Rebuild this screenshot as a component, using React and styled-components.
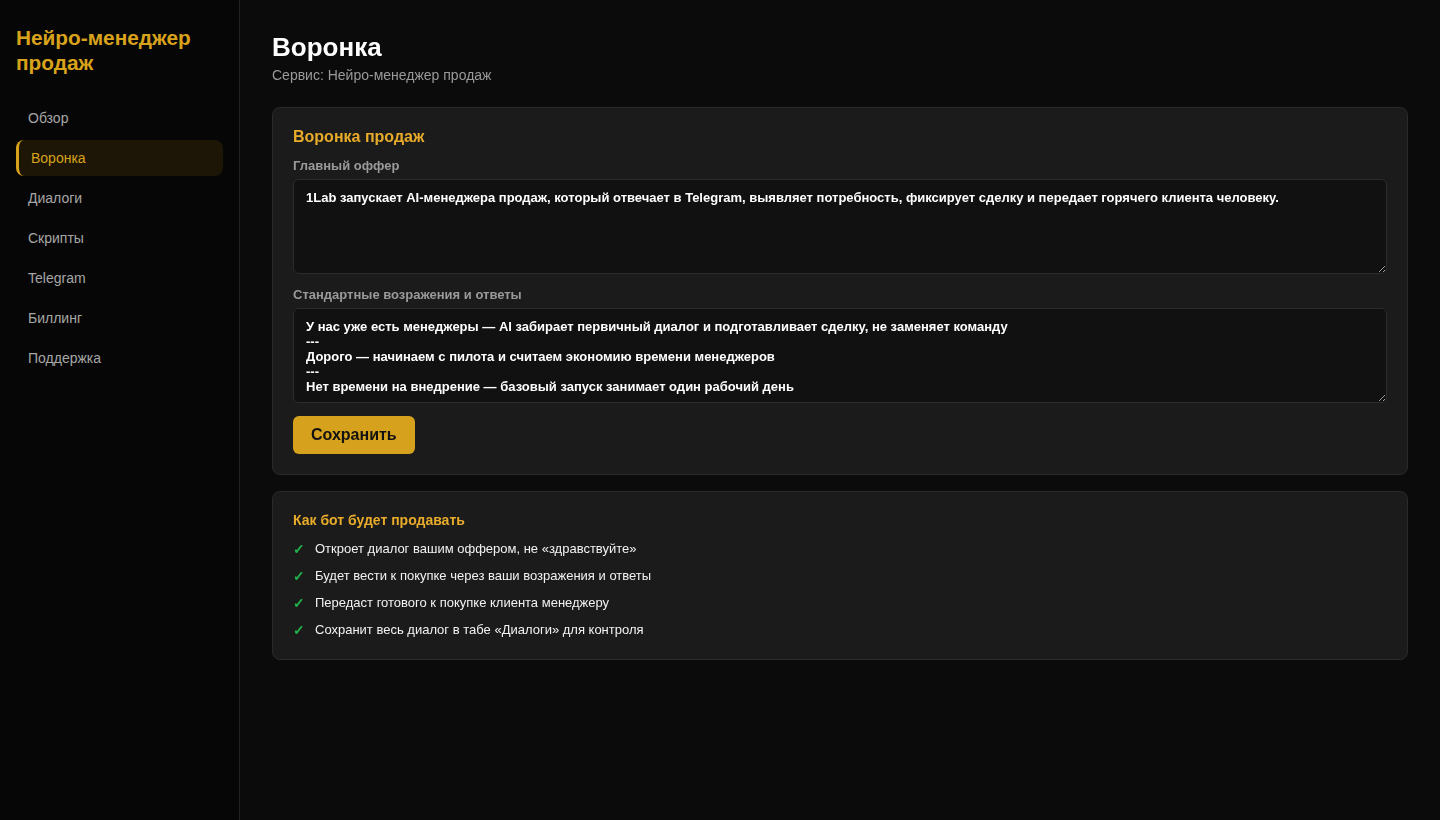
import React from "react";
import styled, { createGlobalStyle } from "styled-components";

const GlobalStyle = createGlobalStyle`
  html, body {
    margin: 0;
    padding: 0;
    background: #0b0b0b;
    font-family: "Liberation Sans", Arial, sans-serif;
  }
  * {
    box-sizing: border-box;
  }
`;

const Layout = styled.div`
  display: flex;
  min-height: 820px;
`;

const Sidebar = styled.aside`
  width: 240px;
  flex-shrink: 0;
  background: #060606;
  border-right: 1px solid #222;
  padding: 25px 16px;
`;

const Brand = styled.div`
  color: #d9a21b;
  font-size: 20.8px;
  font-weight: 700;
  line-height: 25px;
  margin-bottom: 25px;
`;

const Nav = styled.nav`
  display: flex;
  flex-direction: column;
  gap: 4px;
`;

const NavItem = styled.a`
  display: flex;
  align-items: center;
  height: 36px;
  padding: 0 12px;
  border-radius: 8px;
  font-size: 14px;
  color: ${(p) => (p.$active ? "#d9a21b" : "#a6a6a6")};
  background: ${(p) => (p.$active ? "#1d1606" : "transparent")};
  border-left: ${(p) => (p.$active ? "3px solid #d9a21b" : "none")};
  cursor: pointer;
`;

const Main = styled.main`
  flex: 1;
  padding: 32px 32px;
`;

const PageTitle = styled.h1`
  margin: 0;
  color: #fff;
  font-size: 26px;
  font-weight: 700;
  line-height: 30px;
`;

const Subtitle = styled.div`
  margin-top: 5px;
  color: #9a9a9a;
  font-size: 14px;
  line-height: 16px;
`;

const Card = styled.section`
  background: #1b1b1b;
  border: 1px solid #2a2a2a;
  border-radius: 8px;
  padding: 19px 20px 20px;
  margin-top: ${(p) => p.$mt || "16px"};
`;

const CardTitle = styled.h2`
  margin: 0 0 ${(p) => p.$gap || "12px"};
  color: #e8ab2a;
  font-size: ${(p) => p.$size || "16px"};
  font-weight: 700;
  line-height: 19px;
`;

const Label = styled.label`
  display: block;
  color: #9a9a9a;
  font-size: 13px;
  font-weight: 700;
  line-height: 15px;
  margin-bottom: 6px;
`;

const TextArea = styled.textarea`
  display: block;
  width: 100%;
  height: 95px;
  margin: 0 0 13px;
  padding: 10px 12px;
  background: #111;
  border: 1px solid #2c2c2c;
  border-radius: 6px;
  color: #fff;
  font-family: "Liberation Sans", Arial, sans-serif;
  font-size: 13px;
  font-weight: 700;
  line-height: 15px;
  resize: vertical;
  outline: none;
`;

const SaveButton = styled.button`
  height: 38px;
  padding: 0 18px;
  background: #d6a11c;
  border: none;
  border-radius: 6px;
  color: #111;
  font-family: "Liberation Sans", Arial, sans-serif;
  font-size: 16px;
  font-weight: 700;
  cursor: pointer;
`;

const Checklist = styled.ul`
  list-style: none;
  margin: 0;
  padding: 0;
  display: flex;
  flex-direction: column;
  gap: 9px;
`;

const CheckItem = styled.li`
  display: flex;
  align-items: center;
  gap: 12px;
  color: #f2f2f2;
  font-size: 13px;
  line-height: 18px;
`;

const Tick = styled.span`
  color: #22b14c;
  font-size: 14px;
  font-weight: 700;
  width: 10px;
`;

const navItems = ["Обзор", "Воронка", "Диалоги", "Скрипты", "Telegram", "Биллинг", "Поддержка"];

const offer =
  "1Lab запускает AI-менеджера продаж, который отвечает в Telegram, выявляет потребность, фиксирует сделку и передает горячего клиента человеку.";

const objections = [
  "У нас уже есть менеджеры — AI забирает первичный диалог и подготавливает сделку, не заменяет команду",
  "---",
  "Дорого — начинаем с пилота и считаем экономию времени менеджеров",
  "---",
  "Нет времени на внедрение — базовый запуск занимает один рабочий день",
].join("\n");

const steps = [
  "Откроет диалог вашим оффером, не «здравствуйте»",
  "Будет вести к покупке через ваши возражения и ответы",
  "Передаст готового к покупке клиента менеджеру",
  "Сохранит весь диалог в табе «Диалоги» для контроля",
];

export default function App() {
  return (
    <>
      <GlobalStyle />
      <Layout>
        <Sidebar>
          <Brand>Нейро-менеджер продаж</Brand>
          <Nav>
            {navItems.map((item) => (
              <NavItem key={item} $active={item === "Воронка"}>
                {item}
              </NavItem>
            ))}
          </Nav>
        </Sidebar>
        <Main>
          <PageTitle>Воронка</PageTitle>
          <Subtitle>Сервис: Нейро-менеджер продаж</Subtitle>

          <Card $mt="24px">
            <CardTitle>Воронка продаж</CardTitle>
            <Label>Главный оффер</Label>
            <TextArea defaultValue={offer} />
            <Label>Стандартные возражения и ответы</Label>
            <TextArea defaultValue={objections} />
            <SaveButton>Сохранить</SaveButton>
          </Card>

          <Card>
            <CardTitle $size="14px" $gap="10px">Как бот будет продавать</CardTitle>
            <Checklist>
              {steps.map((s) => (
                <CheckItem key={s}>
                  <Tick>✓</Tick>
                  {s}
                </CheckItem>
              ))}
            </Checklist>
          </Card>
        </Main>
      </Layout>
    </>
  );
}
